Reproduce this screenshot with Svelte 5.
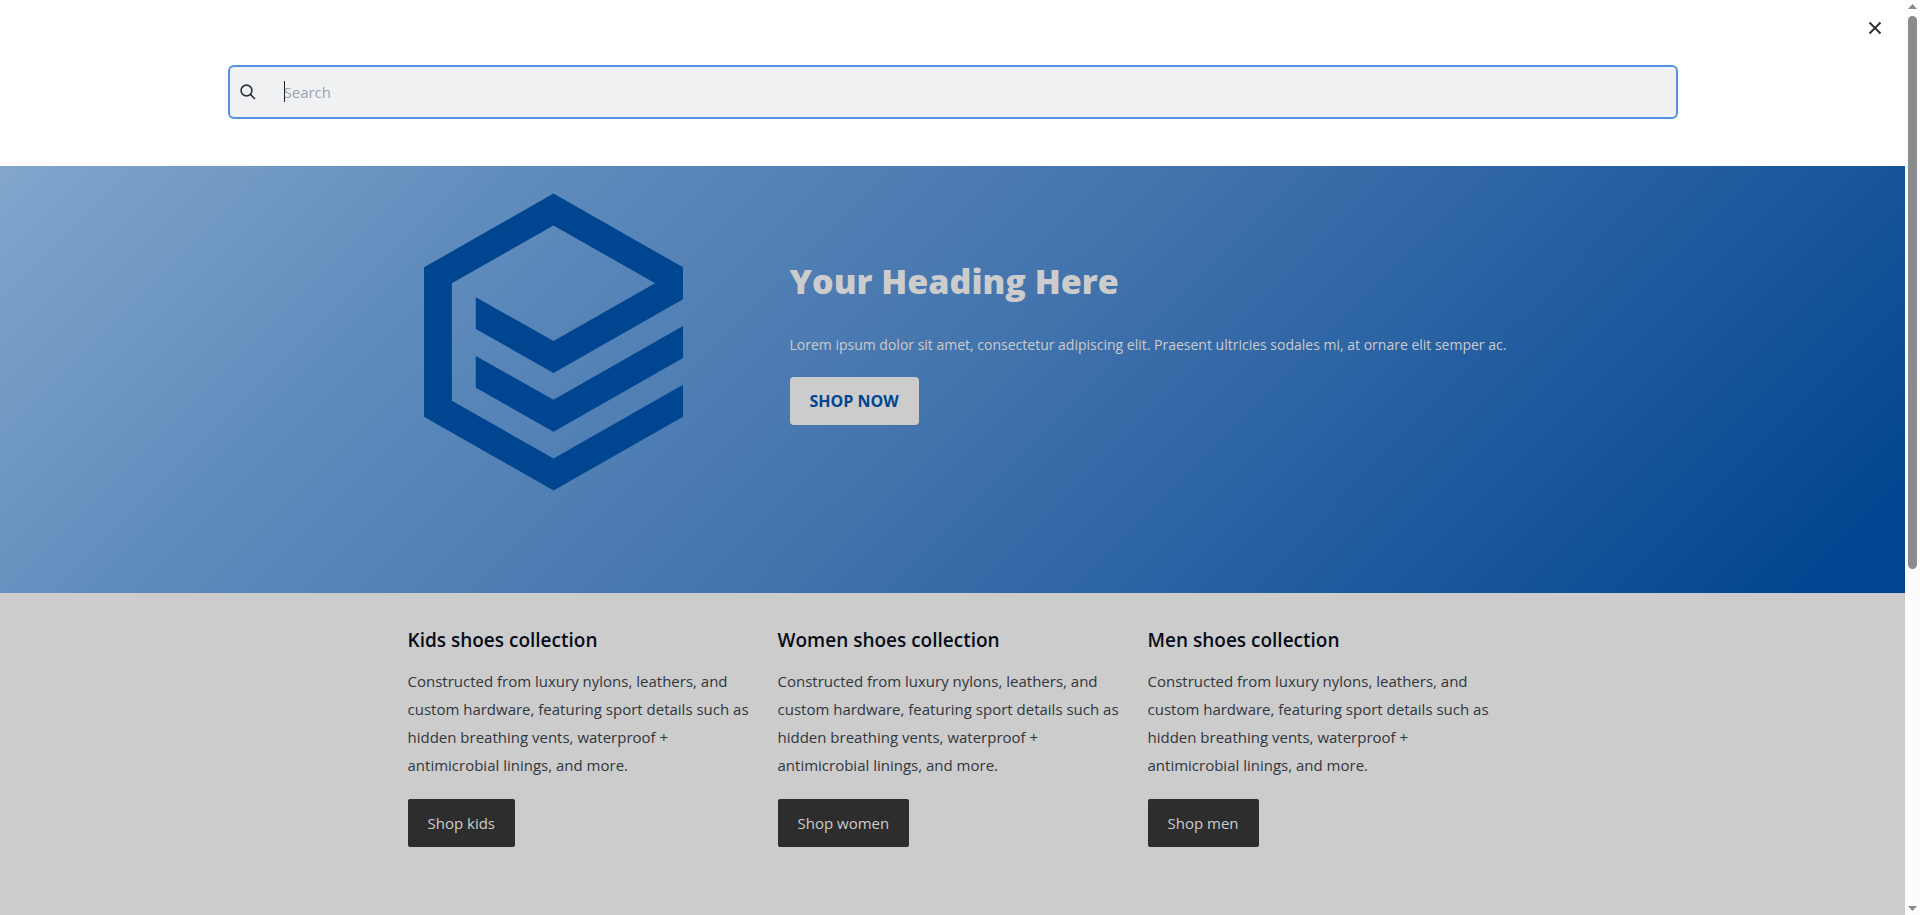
<script>
  const collections = [
    { name: 'Kids', slug: 'kids' },
    { name: 'Women', slug: 'women' },
    { name: 'Men', slug: 'men' }
  ];

  let query = $state('');
  let field;

  $effect(() => {
    field.focus();
  });
</script>

<div class="shell">
  <div class="page">
    <header class="search-panel">
      <button class="close" type="button" aria-label="Close search">
        <svg viewBox="0 0 14 14" width="14" height="14" aria-hidden="true">
          <path d="M1.5 1.5 12.5 12.5 M12.5 1.5 1.5 12.5" />
        </svg>
      </button>
      <form class="search" role="search">
        <button class="submit" type="submit" aria-label="Submit search">
          <svg viewBox="0 0 16 16" width="16" height="16" aria-hidden="true">
            <circle cx="6.5" cy="6.5" r="5.4" />
            <path d="M10.4 10.4 15 15" />
          </svg>
        </button>
        <div class="field">
          <input bind:this={field} bind:value={query} type="text" placeholder="Search" aria-label="Search" />
          {#if !query}
            <span class="caret" aria-hidden="true"></span>
          {/if}
        </div>
      </form>
    </header>

    <main>
      <section class="hero">
        <div class="hero-inner">
          <div class="logo">
            <svg viewBox="0 0 260 300" width="259" height="300" aria-hidden="true">
              <path
                d="M130 1 260 75V107L130 181 52 137V105L130 149 232 91 130 33 28 91V209L130 267 260 193V225L130 299 0 225V75Z"
              />
              <path d="M52 164 130 208 260 134V166L130 240 52 196Z" />
              <path class="seam" d="M232 91 260 75" />
            </svg>
          </div>
          <div class="hero-copy">
            <h1>Your Heading Here</h1>
            <p>
              Lorem ipsum dolor sit amet, consectetur adipiscing elit. Praesent ultricies sodales mi, at ornare elit
              semper ac.
            </p>
            <a class="cta" href="#collections">SHOP NOW</a>
          </div>
        </div>
      </section>

      <section class="collections" id="collections">
        {#each collections as { name, slug }}
          <article>
            <h2>{name} shoes collection</h2>
            <p>
              Constructed from luxury nylons, leathers, and custom hardware, featuring sport details such as hidden
              breathing vents, waterproof + antimicrobial linings, and more.
            </p>
            <a class="shop" href="#{slug}">Shop {slug}</a>
          </article>
        {/each}
      </section>
    </main>
  </div>

  <div class="scrollbar" aria-hidden="true">
    <svg viewBox="0 0 9 5" width="9" height="5"><path d="M4.5 0 9 5H0Z" /></svg>
    <div class="track"><div class="thumb"></div></div>
    <svg viewBox="0 0 9 5" width="9" height="5"><path d="M0 0H9L4.5 5Z" /></svg>
  </div>
</div>

<style>
  :global(body) {
    margin: 0;
    background: #cccccc;
  }

  .shell {
    display: grid;
    grid-template-columns: minmax(0, 1fr) 15px;
    min-height: 100vh;
    font-family: 'Segoe UI', 'Open Sans', sans-serif;
    font-size: 15px;
    line-height: 28px;
    color: #30363d;
  }

  .shell * {
    box-sizing: border-box;
  }

  .search-panel {
    display: flex;
    flex-direction: column;
    align-items: center;
    padding: 16px 18px 47px;
    background: #ffffff;
  }

  .close {
    display: flex;
    align-self: flex-end;
    padding: 5px;
    margin-bottom: 25px;
    border: 0;
    background: none;
  }

  .close path,
  .submit circle,
  .submit path {
    fill: none;
    stroke: #303338;
    stroke-width: 2;
  }

  .submit circle,
  .submit path {
    stroke-width: 1.6;
  }

  .search {
    display: flex;
    width: 100%;
    max-width: 1450px;
    height: 54px;
    border: 2px solid #5491e0;
    border-radius: 6px;
    background: #f0f1f3;
  }

  .submit {
    display: flex;
    align-items: center;
    padding: 0 10px;
    border: 0;
    background: none;
  }

  .field {
    position: relative;
    display: flex;
    flex: 1;
    min-width: 0;
  }

  .field input {
    flex: 1;
    min-width: 0;
    padding: 0 18px;
    border: 0;
    outline: 0;
    background: none;
    font: inherit;
    color: #303338;
  }

  .field input:placeholder-shown {
    caret-color: transparent;
  }

  .field input::placeholder {
    color: #9ca3ab;
    opacity: 1;
  }

  .caret {
    position: absolute;
    top: 14px;
    left: 18px;
    width: 1px;
    height: 21px;
    background: #202226;
    pointer-events: none;
  }

  .hero {
    min-height: 427px;
    background: linear-gradient(135deg, #82a6cc 0%, #618dbd 22%, #4374ad 50%, #2a62a3 68%, #004590 97%);
  }

  .hero-inner,
  .collections {
    width: 100%;
    max-width: 1090px;
    margin: 0 auto;
  }

  .hero-inner {
    display: grid;
    grid-template-columns: 312px minmax(0, 1fr);
    column-gap: 90px;
    max-width: 1130px;
    padding-top: 26px;
  }

  .logo {
    padding-left: 36px;
  }

  .logo svg {
    display: block;
    fill: #004590;
  }

  .logo .seam {
    stroke: #1b5599;
    stroke-width: 0.5;
  }

  .hero-copy {
    padding-top: 67px;
    color: #cccccc;
  }

  h1,
  h2,
  p {
    margin: 0;
  }

  h1 {
    font-size: 34px;
    font-weight: 800;
    line-height: 44px;
    margin-bottom: 28px;
  }

  .hero-copy p {
    margin-bottom: 18px;
    font-size: 14px;
  }

  .cta,
  .shop {
    display: inline-block;
    padding: 10px 20px;
    border-radius: 4px;
    text-decoration: none;
  }

  .cta {
    background: #cccccc;
    color: #004590;
    font-size: 16px;
    font-weight: 700;
  }

  .collections {
    display: grid;
    grid-template-columns: repeat(3, minmax(0, 1fr));
    column-gap: 20px;
    padding: 32px 0 68px;
  }

  h2 {
    margin-bottom: 12px;
    font-size: 19px;
    font-weight: 600;
    line-height: 30px;
    color: #070c18;
  }

  article p {
    margin-bottom: 20px;
  }

  .shop {
    border-radius: 2px;
    background: #2d2d2d;
    color: #cccccc;
  }

  .scrollbar {
    display: flex;
    flex-direction: column;
    align-items: center;
    gap: 7px;
    padding: 4px 0;
    background: #fcfcfc;
  }

  .scrollbar svg {
    fill: #8b8b8b;
  }

  .track {
    flex: 1;
    width: 9px;
  }

  .thumb {
    height: 62.6%;
    border-radius: 5px;
    background: #8b8b8b;
  }
</style>
